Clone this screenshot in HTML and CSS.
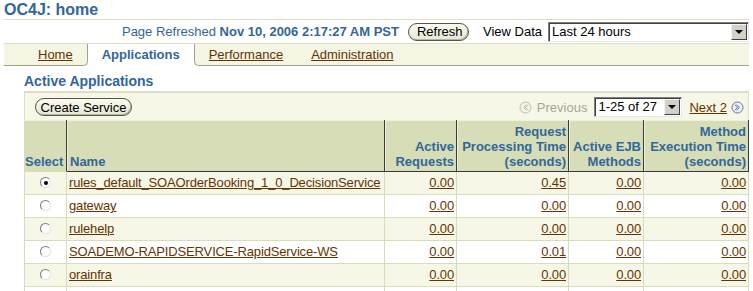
FILE: index.html
```html
<!DOCTYPE html>
<html lang="en">
<head>
    <meta charset="UTF-8" />
    <title>OC4J: home</title>
    <link rel="stylesheet" href="styles.css">
</head>
<body>
    <div class="brand">
        <h1>OC4J: home</h1>
    </div>

    <div class="refresh-bar">
        <span class="refreshed">Page Refreshed <b>Nov 10, 2006 2:17:27 AM PST</b></span>
        <button class="btn refresh-btn">Refresh</button>
        <span class="view-label">View Data</span>
        <div class="combo combo-range">
            <span class="combo-text">Last 24 hours</span>
            <span class="combo-arrow"></span>
        </div>
    </div>

    <div class="tabs">
        <a class="tab tab-first before-sel" href="#">Home</a>
        <span class="tab selected">Applications</span>
        <a class="tab after-sel" href="#">Performance</a>
        <a class="tab" href="#">Administration</a>
        <div class="tab-fill"></div>
    </div>

    <div class="content">
        <h2>Active Applications</h2>

        <div class="controls">
            <button class="btn create-btn">Create Service</button>
            <div class="pager">
                <svg class="nav-icon" width="13" height="13" viewBox="0 0 13 13">
                    <circle cx="6.5" cy="6.5" r="5.5" fill="#f4f4e6" stroke="#bdbdad" stroke-width="1"/>
                    <path d="M7.5 3.8 L4.6 6.5 L7.5 9.2 M9.2 3.8 L6.3 6.5 L9.2 9.2" fill="none" stroke="#bdbdad" stroke-width="1"/>
                </svg>
                <span class="prev-text">Previous</span>
                <div class="combo combo-page">
                    <span class="combo-text">1-25 of 27</span>
                    <span class="combo-arrow"></span>
                </div>
                <a class="next-link" href="#">Next 2</a>
                <svg class="nav-icon" width="13" height="13" viewBox="0 0 13 13">
                    <circle cx="6.5" cy="6.5" r="5.5" fill="#eef0f6" stroke="#6478a6" stroke-width="1"/>
                    <path d="M5.5 3.8 L8.4 6.5 L5.5 9.2 M3.8 3.8 L6.7 6.5 L3.8 9.2" fill="none" stroke="#6478a6" stroke-width="1"/>
                </svg>
            </div>
        </div>

        <table class="grid">
            <colgroup>
                <col class="c-sel">
                <col class="c-name">
                <col class="c-ar">
                <col class="c-rpt">
                <col class="c-ejb">
                <col class="c-met">
            </colgroup>
            <thead>
                <tr>
                    <th class="sel">Select</th>
                    <th class="name">Name</th>
                    <th class="num">Active<br>Requests</th>
                    <th class="num">Request<br>Processing Time<br>(seconds)</th>
                    <th class="num">Active EJB<br>Methods</th>
                    <th class="num">Method<br>Execution Time<br>(seconds)</th>
                </tr>
            </thead>
            <tbody>
                <tr class="odd">
                    <td class="sel"><span class="radio checked"></span></td>
                    <td><a href="#">rules_default_SOAOrderBooking_1_0_DecisionService</a></td>
                    <td class="num"><a href="#">0.00</a></td>
                    <td class="num"><a href="#">0.45</a></td>
                    <td class="num"><a href="#">0.00</a></td>
                    <td class="num"><a href="#">0.00</a></td>
                </tr>
                <tr>
                    <td class="sel"><span class="radio"></span></td>
                    <td><a href="#">gateway</a></td>
                    <td class="num"><a href="#">0.00</a></td>
                    <td class="num"><a href="#">0.00</a></td>
                    <td class="num"><a href="#">0.00</a></td>
                    <td class="num"><a href="#">0.00</a></td>
                </tr>
                <tr class="odd">
                    <td class="sel"><span class="radio"></span></td>
                    <td><a href="#">rulehelp</a></td>
                    <td class="num"><a href="#">0.00</a></td>
                    <td class="num"><a href="#">0.00</a></td>
                    <td class="num"><a href="#">0.00</a></td>
                    <td class="num"><a href="#">0.00</a></td>
                </tr>
                <tr>
                    <td class="sel"><span class="radio"></span></td>
                    <td><a href="#">SOADEMO-RAPIDSERVICE-RapidService-WS</a></td>
                    <td class="num"><a href="#">0.00</a></td>
                    <td class="num"><a href="#">0.01</a></td>
                    <td class="num"><a href="#">0.00</a></td>
                    <td class="num"><a href="#">0.00</a></td>
                </tr>
                <tr class="odd">
                    <td class="sel"><span class="radio"></span></td>
                    <td><a href="#">orainfra</a></td>
                    <td class="num"><a href="#">0.00</a></td>
                    <td class="num"><a href="#">0.00</a></td>
                    <td class="num"><a href="#">0.00</a></td>
                    <td class="num"><a href="#">0.00</a></td>
                </tr>
                <tr class="more">
                    <td class="sel"></td>
                    <td></td>
                    <td class="num"></td>
                    <td class="num"></td>
                    <td class="num"></td>
                    <td class="num"></td>
                </tr>
            </tbody>
        </table>
    </div>
</body>
</html>
```

FILE: styles.css
```css
* {
    margin: 0;
    padding: 0;
    box-sizing: border-box;
}

body {
    font-family: "Liberation Sans", Arial, sans-serif;
    font-size: 13px;
    color: #000;
    background: #fff;
    width: 753px;
    height: 291px;
    overflow: hidden;
}

a {
    color: #663300;
}

/* title */

.brand {
    margin: 0 4px;
    border-bottom: 1px solid #dcdfc4;
}

.brand h1 {
    padding-top: 1px;
    font-size: 16px;
    line-height: 18px;
    color: #336699;
}

/* refresh row */

.refresh-bar {
    height: 23px;
    display: flex;
    align-items: center;
    justify-content: flex-end;
    padding-right: 4px;
}

.refreshed {
    color: #336699;
    margin-right: 9px;
}

.view-label {
    margin: 0 6px 0 14px;
}

.btn {
    font-family: inherit;
    font-size: 13px;
    color: #000;
    height: 18px;
    line-height: 15px;
    padding: 0 8px;
    border: 1px solid #55554a;
    border-radius: 9px;
    background: linear-gradient(#fbfbf1, #e6e6d2);
    box-shadow: inset -1px -1px 0 #b8b8a0;
}

.refresh-btn {
    width: 61px;
}

.combo {
    display: flex;
    height: 20px;
    background: #fff;
    border: 1px solid;
    border-color: #808080 #e8e8e8 #e8e8e8 #808080;
    box-shadow: inset 1px 1px 0 #404040;
}

.combo-text {
    flex: 1;
    padding: 1px 0 0 3px;
    line-height: 16px;
}

.combo-arrow {
    width: 16px;
    height: 16px;
    margin: 1px 1px 0 0;
    background: #d4d0c8;
    border: 1px solid;
    border-color: #f4f4f4 #404040 #404040 #f4f4f4;
    position: relative;
}

.combo-arrow::after {
    content: "";
    position: absolute;
    left: 3px;
    top: 5px;
    border-left: 4px solid transparent;
    border-right: 4px solid transparent;
    border-top: 4px solid #000;
}

.combo-range {
    width: 201px;
}

.combo-page {
    width: 88px;
}

/* tabs */

.tabs {
    margin: 0 4px;
    display: flex;
    background: #f5f5e4;
    border-top: 1px solid #dcdfc4;
}

.tab {
    height: 22px;
    line-height: 21px;
    padding: 0 14px;
    border-bottom: 1px solid #a3a384;
}

.tab-first {
    padding-left: 34px;
}

.tab.selected {
    background: #fff;
    border-bottom-color: #fff;
    color: #336699;
    font-weight: bold;
}

.tab.before-sel {
    border-right: 1px solid #a3a384;
    border-bottom-right-radius: 5px;
}

.tab.after-sel {
    border-left: 1px solid #a3a384;
    border-bottom-left-radius: 5px;
}

.tab-fill {
    flex: 1;
    border-bottom: 1px solid #a3a384;
}

/* content */

.content {
    margin-left: 24px;
    width: 725px;
}

.content h2 {
    margin-top: 7px;
    font-size: 14px;
    line-height: 17px;
    color: #336699;
    padding-bottom: 1px;
    border-bottom: 1px solid #dcdfc4;
}

.controls {
    height: 28px;
    display: flex;
    align-items: center;
    justify-content: space-between;
    padding: 1px 4px 0 10px;
    background: #f7f7e7;
    border: 1px solid #dcdfc4;
    border-bottom: none;
}

.create-btn {
    width: 97px;
    padding: 0;
}

.pager {
    display: flex;
    align-items: center;
}

.prev-text {
    color: #a8a898;
    margin: 0 7px 0 5px;
}

.next-link {
    margin: 0 4px 0 7px;
}

.nav-icon {
    display: block;
}

/* grid */

.grid {
    width: 725px;
    table-layout: fixed;
    border-collapse: separate;
    border-spacing: 0;
}

.c-sel { width: 43px; }
.c-name { width: 318px; }
.c-ar { width: 72px; }
.c-rpt { width: 112px; }
.c-ejb { width: 75px; }
.c-met { width: 105px; }

.grid th {
    background: #d6ddb7;
    color: #336699;
    font-size: 13px;
    line-height: 15px;
    text-align: left;
    vertical-align: bottom;
    padding: 4px 2px 2px 3px;
    border-right: 1px solid #3a3a3a;
    border-bottom: 1px solid #3a3a3a;
    box-shadow: inset 1px 1px 0 #eef1dc;
}

.grid th.sel {
    padding-left: 1px;
    border-bottom: 1px solid #d6ddb7;
    box-shadow: inset 0 1px 0 #eef1dc;
}

.grid th.num {
    text-align: right;
}

.grid td {
    height: 23px;
    line-height: 15px;
    padding: 3px 2px 4px 2px;
    border-right: 1px solid #d6ddb7;
    border-bottom: 1px solid #d6ddb7;
    white-space: nowrap;
    overflow: hidden;
}

.grid td a {
    letter-spacing: -0.15px;
}

.grid td:first-child {
    border-left: 1px solid #d6ddb7;
}

.grid tr.odd td {
    background: #f7f7e7;
}

.grid td.num {
    text-align: right;
}

.grid td.sel {
    text-align: center;
}

.radio {
    display: inline-block;
    vertical-align: -1px;
    width: 11px;
    height: 11px;
    border-radius: 50%;
    background: #fff;
    border: 1px solid;
    border-color: #7c7c7c #e4e4e4 #e4e4e4 #7c7c7c;
    position: relative;
}

.radio.checked::after {
    content: "";
    position: absolute;
    left: 2.5px;
    top: 2.5px;
    width: 4px;
    height: 4px;
    border-radius: 50%;
    background: #000;
}
```
